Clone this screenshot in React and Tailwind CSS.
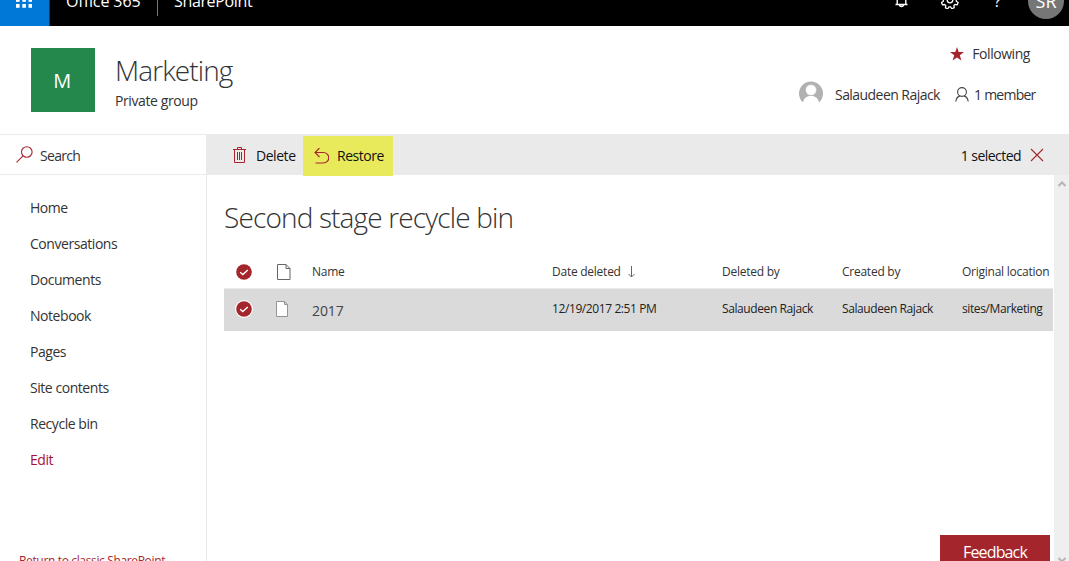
import React, { useState } from 'react';

const navItems = ['Home', 'Conversations', 'Documents', 'Notebook', 'Pages', 'Site contents', 'Recycle bin'];

const rows = [
  {
    name: '2017',
    deleted: '12/19/2017 2:51 PM',
    deletedBy: 'Salaudeen Rajack',
    createdBy: 'Salaudeen Rajack',
    location: 'sites/Marketing',
  },
];

const columns = 'grid grid-cols-[40px_48px_240px_170px_120px_120px_91px] items-center';

function Waffle() {
  return (
    <svg width="16" height="16" viewBox="0 0 16 16" fill="white" className="-mt-0.5">
      {[0, 6, 12].map((y) =>
        [0, 6.3, 12.5].map((x) => <rect key={`${x}-${y}`} x={x} y={y} width="3.6" height="3.8" />)
      )}
    </svg>
  );
}

function Bell() {
  return (
    <svg width="16" height="18" viewBox="0 0 16 18" fill="none" stroke="white" strokeWidth="1.4">
      <path d="M1.500 14.500h12M3.200 14V6.500a4.300 4.300 0 0 1 8.600 0V14M5.500 14.500a2 2 0 0 0 4 0" />
    </svg>
  );
}

function Gear() {
  return (
    <svg width="18" height="18" viewBox="0 0 18 18" fill="none" stroke="white" strokeWidth="1.3" strokeLinejoin="round">
      <path
        transform="rotate(22.5 9 9)"
        d="M7.700 1h2.600l.4 2.200 1.500.6 1.800-1.200 1.900 1.900-1.200 1.800.6 1.500 2.200.4v2.600l-2.200.4-.6 1.500 1.200 1.800-1.900 1.900-1.800-1.200-1.500.6-.4 2.200H7.700l-.4-2.200-1.500-.6L4 16.400l-1.900-1.900 1.200-1.800-.6-1.500-2.200-.4V8.200l2.200-.4.6-1.500-1.200-1.800L4 2.600l1.800 1.200 1.500-.6z"
      />
      <circle cx="9" cy="9" r="2.800" />
    </svg>
  );
}

function CheckCircle({ ring }) {
  return (
    <svg width="18" height="18" viewBox="0 0 18 18">
      {ring && <circle cx="9" cy="9" r="8.900" fill="white" />}
      <circle cx="9" cy="9" r="7.800" fill="#a4262c" />
      <path d="M5.200 9.200l2.600 2.400 5-4.700" fill="none" stroke="white" strokeWidth="1.400" />
    </svg>
  );
}

function FileIcon({ small }) {
  return (
    <svg width={small ? 12 : 14} height="16" viewBox={small ? '0 0 12 16' : '0 0 14 16'} fill="white" strokeWidth="1">
      {small ? (
        <path d="M.5.5h8l3 3v12H.5zM8.500.5v3h3" stroke="#949494" />
      ) : (
        <path d="M.5.5h8.500l4 4v11H.5zM9 .5v4h4" stroke="#666666" />
      )}
    </svg>
  );
}

function TopBar() {
  return (
    <div className="-mt-6 flex h-[50px] shrink-0 items-center bg-black tracking-[-0.1px] text-white">
      <div className="flex h-full w-[50px] items-center justify-center border-r border-[#333] bg-[#0078d7] pr-0.5">
        <Waffle />
      </div>
      <span className="ml-4 w-[76px] whitespace-nowrap text-base">Office 365</span>
      <div className="ml-[15px] h-[30px] w-px bg-[#777]" />
      <span className="ml-4 text-base tracking-[-0.35px]">SharePoint</span>
      <div className="ml-auto flex h-full items-center">
        <div className="-mt-[5px] w-[47px]"><Bell /></div>
        <div className="-mt-[3px] w-[53px]"><Gear /></div>
        <span className="w-[34px] text-base">?</span>
        <div className="mr-[5px] flex size-9 items-center justify-center rounded-full bg-[#767676] pt-px text-[18px]">SR</div>
      </div>
    </div>
  );
}

function SiteHeader() {
  return (
    <header className="flex h-[108px] shrink-0 pl-[31px] pr-[35px]">
      <div className="mt-[22px] flex size-16 items-center justify-center bg-[#24874b] pr-0.5 pt-0.5 text-[20px] text-white">M</div>
      <div className="ml-5 mt-[24px]">
        <h1 className="text-[28px] font-light leading-[40px] tracking-[-0.9px] text-[#333]">Marketing</h1>
        <p className="text-sm leading-[22px] tracking-[-0.4px]">Private group</p>
      </div>
      <div className="ml-auto flex flex-col items-end pt-[17px]">
        <button className="mr-1 flex h-[22px] items-center gap-2">
          <svg width="14" height="14" viewBox="0 0 14 14" fill="#a4262c">
            <path d="M7 0l1.700 5.100H14L9.800 8.300l1.600 5.300L7 10.400l-4.400 3.200 1.600-5.300L0 5.100h5.300z" />
          </svg>
          <span>Following</span>
        </button>
        <div className="mt-[18px] flex h-[24px] items-center">
          <svg width="24" height="24" viewBox="0 0 24 24" className="mr-3 -mt-1">
            <path d="M4 21.500a12 12 0 1 1 16 0C19 16.500 16 15 12 15s-7 1.500-8 6.500z" fill="#b1b1b1" />
            <circle cx="12" cy="9" r="5.500" fill="white" stroke="#b1b1b1" strokeWidth=".6" />
          </svg>
          <span className="w-[120px] tracking-[-0.55px]">Salaudeen Rajack</span>
          <svg width="14" height="15" viewBox="0 0 14 15" fill="none" stroke="#444" strokeWidth="1.100" className="mr-[5px] -mt-0.5">
            <circle cx="7" cy="5" r="4.400" />
            <path d="M.8 14.500C1.200 11.500 3 9.500 5 8.900M13.200 14.500c-.4-3-2.200-5-4.200-5.600" />
          </svg>
          <span className="w-[60px] whitespace-nowrap tracking-[-0.75px]">1 member</span>
        </div>
      </div>
    </header>
  );
}

function Sidebar() {
  return (
    <aside className="flex w-[207px] shrink-0 flex-col border-r border-[#eaeaea]">
      <div className="flex h-[41px] shrink-0 items-center gap-[7px] border-y border-[#eaeaea] pl-4 pt-[3px]">
        <svg width="17" height="17" viewBox="0 0 17 17" fill="none" stroke="#a4262c" strokeWidth="1.100" className="-mt-[3px]">
          <circle cx="10.800" cy="6" r="5.300" />
          <path d="M7 9.800L.5 16.300" />
        </svg>
        <span className="tracking-[-0.7px]">Search</span>
      </div>
      <nav className="flex flex-col pl-[30px] pt-[15px]">
        {navItems.map((item) => (
          <a key={item} className="h-9 leading-9">{item}</a>
        ))}
        <a className="h-9 leading-9 text-[#a80f3b]">Edit</a>
      </nav>
      <a className="mt-[73px] pl-[19px] text-xs leading-[20px] tracking-[-0.35px] text-[#a4262c]">Return to classic SharePoint</a>
    </aside>
  );
}

function CommandBar({ selected, onClear }) {
  return (
    <div className="flex h-[41px] shrink-0 bg-[#eaeaea] pl-[26px] pr-[25px] text-[#111]">
      <button className="flex w-[70px] items-center gap-[10px] pt-[3px]">
        <svg width="13" height="16" viewBox="0 0 13 16" fill="none" stroke="#a4262c" className="-mt-[3px]">
          <path d="M0 2.500h13M4.500 2V.5h4V2M1.500 3v12.500h10V3M4.500 5v8M6.500 5v8M8.500 5v8" />
        </svg>
        Delete
      </button>
      <button className="mt-0.5 flex h-10 w-[90px] items-center gap-2 bg-[#e9e95c] pl-[11px]">
        <svg width="15" height="16" viewBox="0 0 15 16" fill="none" stroke="#a4262c" strokeWidth="1.100" className="-mt-px">
          <path d="M5.500 0L1 4.500 5.500 9M1 4.500h8.500a5 5 0 0 1 0 10.500H1.500" />
        </svg>
        Restore
      </button>
      <button className="ml-auto flex items-center gap-[9px] pt-[3px] tracking-[-0.55px]" onClick={onClear}>
        {selected} selected
        <svg width="14" height="14" viewBox="0 0 14 14" stroke="#a4262c" strokeWidth="1.100" className="-mt-[3px]">
          <path d="M1 1l12 12M13 1L1 13" />
        </svg>
      </button>
    </div>
  );
}

function RecycleTable({ selected }) {
  return (
    <div className="mt-[15px] text-xs tracking-[-0.25px]">
      <div className={`${columns} h-[39px] border-b border-[#eaeaea] pt-[5px]`}>
        <span className="pl-[11px]"><CheckCircle /></span>
        <span className="pl-[13px]"><FileIcon /></span>
        <span>Name</span>
        <span className="flex items-center gap-[7px]">
          Date deleted
          <svg width="7" height="12" viewBox="0 0 7 12" fill="none" stroke="#666">
            <path d="M3.500 0v11M.5 8l3 3 3-3" />
          </svg>
        </span>
        <span>Deleted by</span>
        <span>Created by</span>
        <span className="whitespace-nowrap">Original location</span>
      </div>
      {rows.map((row) => (
        <div key={row.name} className={`${columns} h-[42px] ${selected ? 'bg-[#dadada]' : 'bg-white'} pb-[2px] tracking-[-0.4px] text-[#222]`}>
          <span className="pl-[11px]"><CheckCircle ring /></span>
          <span className="pl-[12px]"><FileIcon small /></span>
          <span className="pt-[3px] text-sm tracking-[-0.1px] text-[#444]">{row.name}</span>
          <span>{row.deleted}</span>
          <span>{row.deletedBy}</span>
          <span>{row.createdBy}</span>
          <span>{row.location}</span>
        </div>
      ))}
    </div>
  );
}

function App() {
  const [selected, setSelected] = useState(1);

  return (
    <div className="flex h-[561px] w-[1069px] flex-col overflow-hidden bg-white font-['Open_Sans','Noto_Sans',sans-serif] text-sm tracking-[-0.45px] text-[#333]">
      <TopBar />
      <SiteHeader />
      <div className="flex min-h-0 flex-1">
        <Sidebar />
        <main className="flex min-w-0 flex-1 flex-col">
          <CommandBar selected={selected} onClear={() => setSelected(0)} />
          <div className="flex min-h-0 flex-1">
            <div className="flex w-[847px] flex-col pl-[17px] pr-px">
              <h2 className="mt-[24px] text-[28px] font-light leading-[36px] tracking-[-0.85px]">Second stage recycle bin</h2>
              <RecycleTable selected={selected > 0} />
              <button className="mr-[3px] mt-auto flex h-[26px] w-[110px] items-center justify-center self-end bg-[#a4262c] pt-[7px] text-base tracking-[-0.85px] text-white">
                Feedback
              </button>
            </div>
            <div className="flex flex-1 flex-col items-center justify-between bg-[#efefef] pt-1.5 text-[#b5b5b5]">
              <svg width="8" height="6" viewBox="0 0 8 6" fill="none" stroke="currentColor" strokeWidth="2">
                <path d="M.5 5L4 1.500 7.500 5" />
              </svg>
              <svg width="8" height="4" viewBox="0 0 8 4" fill="none" stroke="currentColor" strokeWidth="2">
                <path d="M.5 1L4 4.500 7.500 1" />
              </svg>
            </div>
          </div>
        </main>
      </div>
    </div>
  );
}

export default App;
